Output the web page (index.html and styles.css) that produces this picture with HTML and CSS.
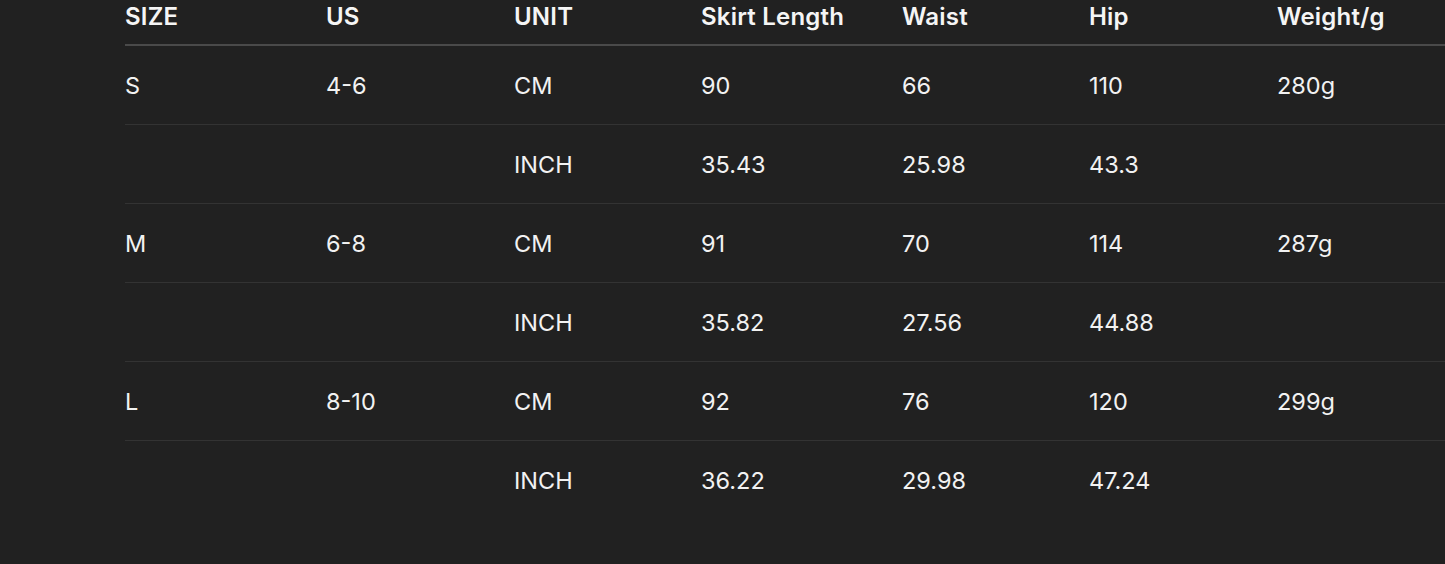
FILE: index.html
```html
<!DOCTYPE html>
<html>
<head>
<meta charset="utf-8">
<link rel="stylesheet" href="styles.css">
</head>
<body>
<div class="wrap">
  <div class="table">
    <div class="row head">
      <div>SIZE</div><div>US</div><div>UNIT</div><div>Skirt Length</div><div>Waist</div><div>Hip</div><div>Weight/g</div>
    </div>
    <div class="row"><div>S</div><div>4-6</div><div>CM</div><div>90</div><div>66</div><div>110</div><div>280g</div></div>
    <div class="row"><div></div><div></div><div>INCH</div><div>35.43</div><div>25.98</div><div>43.3</div><div></div></div>
    <div class="row"><div>M</div><div>6-8</div><div>CM</div><div>91</div><div>70</div><div>114</div><div>287g</div></div>
    <div class="row"><div></div><div></div><div>INCH</div><div>35.82</div><div>27.56</div><div>44.88</div><div></div></div>
    <div class="row"><div>L</div><div>8-10</div><div>CM</div><div>92</div><div>76</div><div>120</div><div>299g</div></div>
    <div class="row last"><div></div><div></div><div>INCH</div><div>36.22</div><div>29.98</div><div>47.24</div><div></div></div>
  </div>
</div>
</body>
</html>
```
FILE: styles.css
```css
html, body {
  margin: 0;
  padding: 0;
  background: #212121;
  overflow: hidden;
}
.wrap {
  padding-left: 125px;
  width: 1445px;
  height: 564px;
  box-sizing: border-box;
  overflow: hidden;
}
.table {
  width: 1400px;
  font-family: Inter, "Noto Sans", sans-serif;
  color: #f2f2f2;
  font-size: 23.5px;
}
.row {
  display: grid;
  grid-template-columns: 201px 188px 187px 201px 187px 188px 200px;
  height: 79px;
  align-items: center;
  border-bottom: 1px solid #333333;
  box-sizing: border-box;
}
.row.head {
  height: 46px;
  align-items: start;
  font-weight: 600;
  font-size: 24px;
  letter-spacing: 0.2px;
  border-bottom: 2px solid #4a4a4a;
  color: #f5f5f5;
}
.row.head > div {
  line-height: 34px;
}
.row.last {
  border-bottom: none;
}
```
